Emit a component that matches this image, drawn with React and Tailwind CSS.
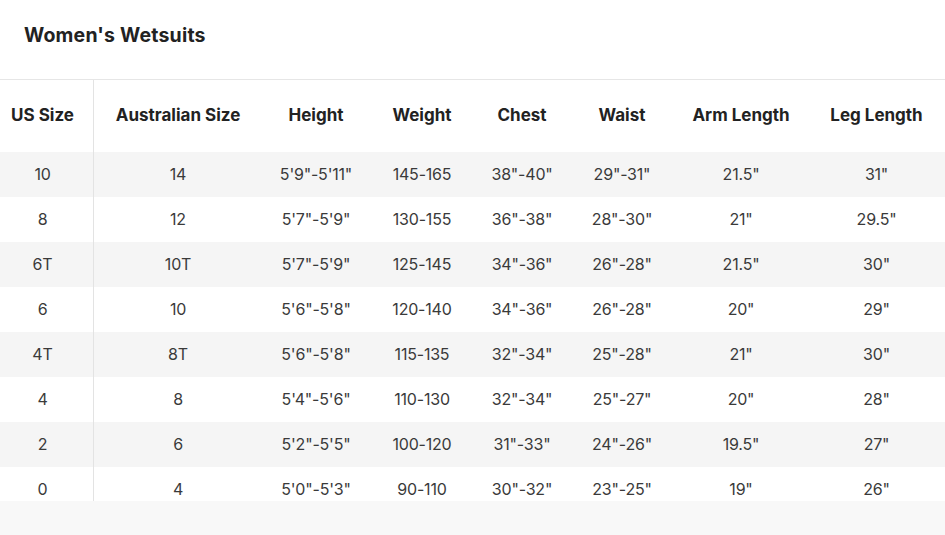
const headers = ['US Size', 'Australian Size', 'Height', 'Weight', 'Chest', 'Waist', 'Arm Length', 'Leg Length'];

const rows = [
    ['10', '14', '5\'9"-5\'11"', '145-165', '38"-40"', '29"-31"', '21.5"', '31"'],
    ['8', '12', '5\'7"-5\'9"', '130-155', '36"-38"', '28"-30"', '21"', '29.5"'],
    ['6T', '10T', '5\'7"-5\'9"', '125-145', '34"-36"', '26"-28"', '21.5"', '30"'],
    ['6', '10', '5\'6"-5\'8"', '120-140', '34"-36"', '26"-28"', '20"', '29"'],
    ['4T', '8T', '5\'6"-5\'8"', '115-135', '32"-34"', '25"-28"', '21"', '30"'],
    ['4', '8', '5\'4"-5\'6"', '110-130', '32"-34"', '25"-27"', '20"', '28"'],
    ['2', '6', '5\'2"-5\'5"', '100-120', '31"-33"', '24"-26"', '19.5"', '27"'],
    ['0', '4', '5\'0"-5\'3"', '90-110', '30"-32"', '23"-25"', '19"', '26"'],
];

// column widths in px, first column has its divider
const cols = [
    'w-[94px] pr-[8px] border-r border-[#e3e3e3]',
    'w-[168px]',
    'w-[108px]',
    'w-[104px]',
    'w-[96px]',
    'w-[104px]',
    'w-[134px]',
    'flex-1',
];

export default function App() {
    return (
        <div className="w-[945px] h-[535px] bg-[#f8f8f8] flex flex-col text-[#333] font-['Inter','Lato',sans-serif] overflow-hidden">
            {/* Title */}
            <div className="h-[80px] bg-white pl-[24px] pt-[21px] border-b border-[#e6e6e6]">
                <h1 className="text-[19.5px] font-bold text-[#222] tracking-[0.2px]">Women's Wetsuits</h1>
            </div>

            {/* Table */}
            <div className="h-[421px] overflow-hidden bg-white">
                <div className="flex h-[72px]">
                    {headers.map((h, i) => (
                        <div key={h} className={`${cols[i]} flex items-center justify-center text-[17px] font-bold text-[#222]`}>
                            {h}
                        </div>
                    ))}
                </div>
                {rows.map((row, r) => (
                    <div key={r} className={`flex h-[45px] ${r % 2 === 0 ? 'bg-[#f5f5f5]' : 'bg-white'}`}>
                        {row.map((cell, i) => (
                            <div key={i} className={`${cols[i]} flex items-center justify-center pb-[2px] text-[16px] text-[#3a3a3a] tracking-[-0.2px]`}>
                                {cell}
                            </div>
                        ))}
                    </div>
                ))}
            </div>
        </div>
    );
}
